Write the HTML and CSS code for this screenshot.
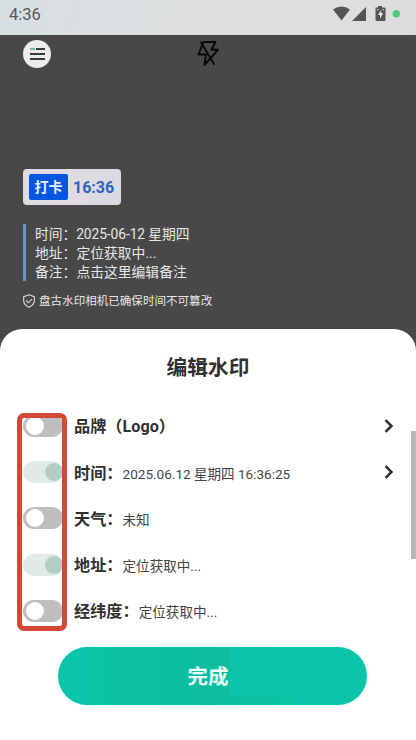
FILE: index.html
```html
<!DOCTYPE html>
<html lang="zh-CN">
<head>
<meta charset="utf-8">
<title>编辑水印</title>
<link rel="stylesheet" href="styles.css">
</head>
<body>
<div class="screen">
  <header class="status">
    <span class="clock">4:36</span>
    <svg class="status-icons" width="72" height="20" viewBox="0 0 72 20">
      <path d="M1 4.500Q9.500-1.500 18 4.500L9.500 15.500Z" fill="#555"/>
      <path d="M34 2V16H20Z" fill="#555"/>
      <path d="M43.500 2.500h2.500V1h4v1.500h2.500q1 0 1 1v11.500q0 1-1 1h-8q-1 0-1-1V3.500z" fill="#555"/>
      <path d="M49.200 5l-3.200 5h2v3.500l3.200-5.200h-2z" fill="#e8e8e8"/>
      <path d="M45 4.700h1.500M50.500 4.700h1.500" stroke="#ddd"/>
      <circle cx="64.300" cy="8.800" r="3.700" fill="#4fca7c"/>
    </svg>
  </header>
  <section class="camera">
    <div class="tools">
      <svg width="28" height="28" viewBox="0 0 28 28">
        <circle cx="14" cy="14" r="14" fill="#ececec"/>
        <path d="M7 8.900h5" stroke="#67b79b" stroke-width="2"/>
        <path d="M13 8.900h9M7 13.900h15M7 19h15" stroke="#3b3b3b" stroke-width="2"/>
      </svg>
      <svg class="flash" width="24" height="28" viewBox="0 0 24 28" fill="none" stroke="#080808" stroke-width="1.900" stroke-linejoin="round" stroke-linecap="round">
        <path d="M7.500 2H19.500L15.500 9.800H22L8.500 25L10 14.500H2.500Z"/>
        <path d="M5 2.500L18 24"/>
      </svg>
    </div>
    <div class="punch"><span class="punch-tag">打卡</span><span class="punch-time">16:36</span></div>
    <div class="details">
      <div>时间：2025-06-12 星期四</div>
      <div>地址：定位获取中...</div>
      <div>备注：点击这里编辑备注</div>
    </div>
    <div class="verified">
      <svg width="12" height="14" viewBox="0 0 12 14" fill="none" stroke="#ddd" stroke-width="1.100">
        <path d="M6 .8L11.300 2.700V7Q11.300 10.700 6 13.200Q.7 10.700.7 7V2.700Z"/>
        <path d="M3.200 6.500L5.500 8.800L9 5.200"/>
      </svg>
      <span>盘古水印相机已确保时间不可篡改</span>
    </div>
  </section>
  <main class="sheet">
    <h1>编辑水印</h1>
    <div class="options">
      <div class="row"><i class="toggle"></i><b>品牌（Logo）</b>
        <svg class="chevron" width="10" height="14" viewBox="0 0 10 14"><path d="M1.500 1.200L7.500 7L1.500 12.800"/></svg></div>
      <div class="row"><i class="toggle on"></i><b>时间：</b><span>2025.06.12 星期四 16:36:25</span>
        <svg class="chevron" width="10" height="14" viewBox="0 0 10 14"><path d="M1.500 1.200L7.500 7L1.500 12.800"/></svg></div>
      <div class="row"><i class="toggle"></i><b>天气：</b><span>未知</span></div>
      <div class="row"><i class="toggle on"></i><b>地址：</b><span>定位获取中...</span></div>
      <div class="row"><i class="toggle"></i><b>经纬度：</b><span>定位获取中...</span></div>
      <div class="highlight"></div>
      <div class="scrollbar"></div>
    </div>
    <button class="done">完成</button>
  </main>
</div>
</body>
</html>
```
FILE: styles.css
```css
* { box-sizing: border-box; }
body { margin: 0; font-family: Roboto, "Noto Sans CJK SC", sans-serif; }
.screen { width: 416px; height: 740px; overflow: hidden; display: flex; flex-direction: column; background: #484848; }
.status { height: 35px; flex: none; display: flex; justify-content: space-between; align-items: flex-start; padding: 5px 12px 0 9px; background: linear-gradient(100deg, #d7dfe3, #dedfdf 50%, #e1dfde 75%, #dcdcdc); }
.clock { font-size: 16.500px; line-height: 20px; color: #555a5d; }
.status-icons { display: block; }
.camera { height: 294px; flex: none; padding: 5px 23px 0; color: #e6e6e6; }
.tools { height: 129px; display: grid; grid-template-columns: 1fr 24px 1fr; align-items: start; }
.punch { width: 98px; height: 36px; border-radius: 4px; background: linear-gradient(90deg, #dfdce2, #e0dbe0 50%, #d8dbe3); display: flex; align-items: center; padding-left: 6px; gap: 5px; }
.punch-tag { width: 39px; height: 26px; line-height: 26px; border-radius: 2px; background: #0356df; color: #e8f2ff; font-size: 14px; font-weight: 700; text-align: center; }
.punch-time { color: #2b65bd; font-size: 16px; font-weight: 700; }
.details { height: 57px; margin-top: 19px; border-left: 3px solid #6b96c4; padding: 1px 0 0 9px; font-size: 13.800px; line-height: 19px; white-space: nowrap; }
.details div:first-child { letter-spacing: -.08px; }
.verified { display: flex; align-items: center; gap: 4px; margin-top: 11px; height: 18px; font-size: 11.550px; line-height: 18px; white-space: nowrap; }
.sheet { flex: 1; background: #fff; border-radius: 22px 22px 0 0; display: flex; flex-direction: column; align-items: center; color: #303030; }
h1 { margin: 23px 0 0; height: 32px; line-height: 32px; font-size: 20.700px; font-weight: 700; }
.options { position: relative; width: 416px; margin-top: 19px; padding: 0 23px; }
.row { height: 46.200px; display: flex; align-items: center; white-space: nowrap; }
.toggle { width: 40px; height: 22px; border-radius: 11px; background: #bebebe; padding: 2px 3px; margin-right: 11px; flex: none; }
.toggle::before { content: ""; display: block; width: 18px; height: 18px; border-radius: 50%; background: #fff; }
.toggle.on { background: #e0ebe6; }
.toggle.on::before { margin-left: 19px; background: #b5cdc4; }
.row b { font-size: 16.200px; padding-bottom: 1.500px; }
.row span { font-size: 13.550px; color: #444; padding-top: 1px; }
.chevron { margin-left: auto; margin-right: -1px; fill: none; stroke: #303030; stroke-width: 2.500; }
.highlight { position: absolute; left: 17px; top: 10px; width: 50px; height: 218px; border: 5px solid #d34834; border-radius: 7px; }
.scrollbar { position: absolute; right: 0; top: 28px; width: 5px; height: 128px; background: #b8b8b8; }
.done { width: 309px; height: 58px; margin: 13px 0 0 8px; padding: 0; border: 0; border-radius: 29px; color: #e9fff9; font: 700 20.500px/60px Roboto, "Noto Sans CJK SC", sans-serif; text-indent: -8px; background: linear-gradient(#0cc5a8, #0cc5a8) 172px 2px / 110px 47px no-repeat, linear-gradient(90deg, #0cc5a8, #0cbc9e 50%, #0cc2a4 70%, #0cc5a8 83%); box-shadow: 0 0 3px #c8fff7; }
```
